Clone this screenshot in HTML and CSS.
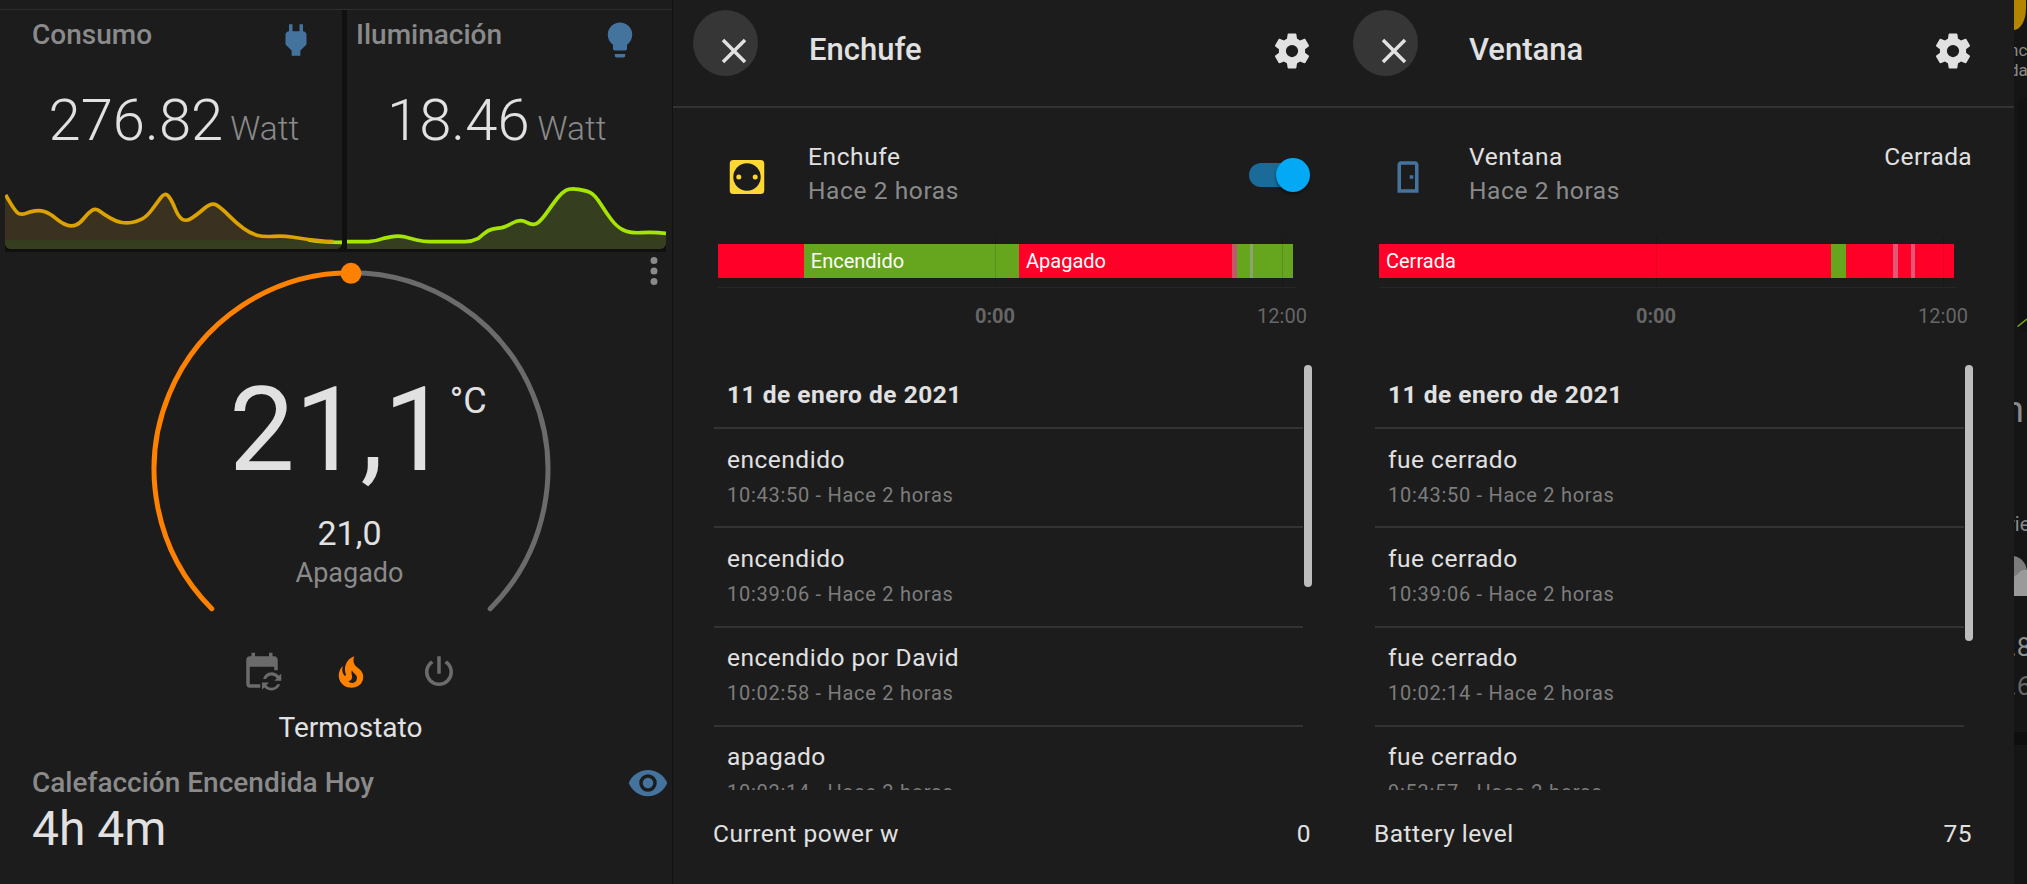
FILE: index.html
```html
<!DOCTYPE html>
<html lang="es">
<head>
<meta charset="utf-8">
<title>Panel</title>
<link rel="stylesheet" href="styles.css">
</head>
<body>
<main class="board">
  <section class="dash">
    <div class="dash-top"></div>
    <div class="stats">
      <article class="stat stat-a">
        <div class="stat-head">
          <h2 class="stat-title">Consumo</h2>
          <svg class="icon tint-blue stat-icon" viewBox="0 0 24 24"><path d="M16,7V3H14V7H10V3H8V7C7,7 6,8 6,9V14.5L9.5,18V21H14.5V18L18,14.5V9C18,8 17,7 16,7Z"/></svg>
        </div>
        <div class="stat-value value-a">276.82<span class="stat-unit">Watt</span></div>
        <svg class="spark spark-a" viewBox="15 0 1011 237" preserveAspectRatio="none">
          <path class="fill-amber" d="M17 75Q45,125 55,130Q65,135 77.5,130Q90,125 105,122.5Q120,120 135,125Q150,130 167.5,145Q185,160 200,165Q215,170 227.5,165Q240,160 252.5,144Q265,128 276,121Q287,114 298.5,123Q310,132 330,143.5Q350,155 365,157.5Q380,160 395,157.5Q410,155 425,147.5Q440,140 455,120Q470,100 482.5,83Q495,66 505,78Q515,90 525,115Q535,140 546.5,147.5Q558,155 574,145Q590,135 612.5,115.5Q635,96 650,105.5Q665,115 687.5,137.5Q710,160 730,175Q750,190 770,195.5Q790,201 820,199Q850,197 875,201Q900,205 925,208.5Q950,212 1026,216V237H15V75Z"/>
          <rect class="fill-lime" x="15" y="211" width="1011" height="26"/>
          <path class="line-lime" d="M925 210Q960,217 1026,217"/>
          <path class="line-amber" d="M17 75Q45,125 55,130Q65,135 77.5,130Q90,125 105,122.5Q120,120 135,125Q150,130 167.5,145Q185,160 200,165Q215,170 227.5,165Q240,160 252.5,144Q265,128 276,121Q287,114 298.5,123Q310,132 330,143.5Q350,155 365,157.5Q380,160 395,157.5Q410,155 425,147.5Q440,140 455,120Q470,100 482.5,83Q495,66 505,78Q515,90 525,115Q535,140 546.5,147.5Q558,155 574,145Q590,135 612.5,115.5Q635,96 650,105.5Q665,115 687.5,137.5Q710,160 730,175Q750,190 770,195.5Q790,201 820,199Q850,197 875,201Q900,205 925,208.5Q950,212 1000,215"/>
        </svg>
      </article>
      <article class="stat stat-b">
        <div class="stat-head">
          <h2 class="stat-title">Iluminación</h2>
          <svg class="icon tint-blue stat-icon" viewBox="0 0 24 24"><path d="M12,2A7,7 0 0,0 5,9C5,11.38 6.19,13.47 8,14.74V17A1,1 0 0,0 9,18H15A1,1 0 0,0 16,17V14.74C17.81,13.47 19,11.38 19,9A7,7 0 0,0 12,2M9,21A1,1 0 0,0 10,22H14A1,1 0 0,0 15,21V20H9V21Z"/></svg>
        </div>
        <div class="stat-value value-b">18.46<span class="stat-unit">Watt</span></div>
        <svg class="spark spark-b" viewBox="21 0 957 237" preserveAspectRatio="none">
          <path class="fill-lime" d="M21 215H85Q110,213 130,205Q130,205 152.5,200.5Q175,196 192.5,200.5Q210,205 230,210Q250,215 270,215H375Q395,215 415,205Q415,205 430,192.5Q445,180 457.5,177.5Q470,175 482.5,173.5Q495,172 517.5,159Q540,146 560,157Q580,168 592.5,159Q605,150 622.5,125Q640,100 652.5,84Q665,68 677.5,61Q690,54 715,58Q740,62 752.5,68.5Q765,75 782.5,102.5Q800,130 815,150Q830,170 850,180Q870,190 905,188Q940,186 978,190V237H21Z"/>
          <path class="line-lime" d="M21 215H85Q110,213 130,205Q130,205 152.5,200.5Q175,196 192.5,200.5Q210,205 230,210Q250,215 270,215H375Q395,215 415,205Q415,205 430,192.5Q445,180 457.5,177.5Q470,175 482.5,173.5Q495,172 517.5,159Q540,146 560,157Q580,168 592.5,159Q605,150 622.5,125Q640,100 652.5,84Q665,68 677.5,61Q690,54 715,58Q740,62 752.5,68.5Q765,75 782.5,102.5Q800,130 815,150Q830,170 850,180Q870,190 905,188Q940,186 978,190"/>
        </svg>
      </article>
    </div>
    <div class="stats-gap"></div>
    <div class="lower">
      <svg class="icon menu-dots" viewBox="0 0 24 24"><path d="M12,16A2,2 0 0,1 14,18A2,2 0 0,1 12,20A2,2 0 0,1 10,18A2,2 0 0,1 12,16M12,10A2,2 0 0,1 14,12A2,2 0 0,1 12,14A2,2 0 0,1 10,12A2,2 0 0,1 12,10M12,4A2,2 0 0,1 14,6A2,2 0 0,1 12,8A2,2 0 0,1 10,6A2,2 0 0,1 12,4Z"/></svg>
      <div class="thermo">
        <div class="dial">
          <svg class="dial-svg" viewBox="0 0 400 360">
            <path class="arc arc-rest" d="M200 12.7A196.8 196.8 0 0 1 339.2 348.7"/>
            <path class="arc arc-on" d="M60.8 348.7A196.8 196.8 0 0 1 200 12.7"/>
            <circle class="dial-dot" cx="200" cy="13.3" r="10.5"/>
          </svg>
          <div class="dial-text">
            <div class="temp-row"><span class="temp">21,1</span><span class="temp-unit">°C</span></div>
            <div class="set-temp">21,0</div>
            <div class="mode">Apagado</div>
          </div>
        </div>
        <div class="modes">
          <svg class="icon tint-grey" viewBox="0 0 24 24"><path d="M11 21H5C3.89 21 3 20.1 3 19V5C3 3.89 3.89 3 5 3H6V1H8V3H16V1H18V3H19C20.1 3 21 3.9 21 5V11H19V9H5V19H11V21Z"/><path d="M17.5 12.2A5.3 5.3 0 0 1 21.6 14.2L23 13V17H19L20.5 15.5A3.6 3.6 0 0 0 17.5 14A3.7 3.7 0 0 0 14.3 16H12.6A5.4 5.4 0 0 1 17.5 12.2ZM12 18H16L14.5 19.5A3.6 3.6 0 0 0 17.5 21A3.7 3.7 0 0 0 20.7 19H22.4A5.4 5.4 0 0 1 13.4 20.8L12 22Z"/></svg>
          <svg class="icon tint-orange" viewBox="0 0 24 24"><path d="M17.66 11.2C17.43 10.9 17.15 10.64 16.89 10.38C16.22 9.78 15.46 9.35 14.82 8.72C13.33 7.26 13 4.85 13.95 3C13 3.23 12.17 3.75 11.46 4.32C8.87 6.4 7.85 10.07 9.07 13.22C9.11 13.32 9.15 13.42 9.15 13.55C9.15 13.77 9 13.97 8.8 14.05C8.57 14.15 8.33 14.09 8.14 13.93C8.08 13.88 8.04 13.83 8 13.76C6.87 12.33 6.69 10.28 7.45 8.64C5.78 10 4.87 12.3 5 14.47C5.06 14.97 5.12 15.47 5.29 15.97C5.43 16.57 5.7 17.17 6 17.7C7.08 19.43 8.95 20.67 10.96 20.92C13.1 21.19 15.39 20.8 17.03 19.32C18.86 17.66 19.5 15 18.56 12.72L18.43 12.46C18.22 12 17.66 11.2 17.66 11.2M14.5 17.5C14.22 17.74 13.76 18 13.4 18.1C12.28 18.5 11.16 17.94 10.5 17.28C11.69 17 12.4 16.12 12.61 15.23C12.78 14.43 12.46 13.77 12.33 13C12.21 12.26 12.23 11.63 12.5 10.94C12.69 11.32 12.89 11.7 13.13 12C13.9 13 15.11 13.44 15.37 14.8C15.41 14.94 15.43 15.08 15.43 15.23C15.46 16.05 15.1 16.95 14.5 17.5H14.5Z"/></svg>
          <svg class="icon tint-grey" viewBox="0 0 24 24"><path d="M16.56,5.44L15.11,6.89C16.84,7.94 18,9.83 18,12A6,6 0 0,1 12,18A6,6 0 0,1 6,12C6,9.83 7.16,7.94 8.88,6.88L7.44,5.44C5.36,6.88 4,9.28 4,12A8,8 0 0,0 12,20A8,8 0 0,0 20,12C20,9.28 18.64,6.88 16.56,5.44M13,3H11V13H13"/></svg>
        </div>
        <div class="thermo-name">Termostato</div>
      </div>
      <div class="today">
        <div class="today-head">
          <h2 class="stat-title wide">Calefacción Encendida Hoy</h2>
          <svg class="icon tint-blue" viewBox="0 0 24 24"><path d="M12,9A3,3 0 0,0 9,12A3,3 0 0,0 12,15A3,3 0 0,0 15,12A3,3 0 0,0 12,9M12,17A5,5 0 0,1 7,12A5,5 0 0,1 12,7A5,5 0 0,1 17,12A5,5 0 0,1 12,17M12,4.5C7,4.5 2.73,7.61 1,12C2.73,16.39 7,19.5 12,19.5C17,19.5 21.27,16.39 23,12C21.27,7.61 17,4.5 12,4.5Z"/></svg>
        </div>
        <div class="today-value">4h 4m</div>
      </div>
    </div>
  </section>

  <section class="dialog">
    <header class="dialog-head">
      <div class="close"><span class="ripple"></span><svg class="icon close-icon" viewBox="0 0 24 24"><path d="M19,6.41L17.59,5L12,10.59L6.41,5L5,6.41L10.59,12L5,17.59L6.41,19L12,13.41L17.59,19L19,17.59L13.41,12L19,6.41Z"/></svg></div>
      <h1 class="dialog-title">Enchufe</h1>
      <svg class="icon gear" viewBox="0 0 24 24"><path d="M12,15.5A3.5,3.5 0 0,1 8.5,12A3.5,3.5 0 0,1 12,8.5A3.5,3.5 0 0,1 15.5,12A3.5,3.5 0 0,1 12,15.5M19.43,12.97C19.47,12.65 19.5,12.33 19.5,12C19.5,11.67 19.47,11.34 19.43,11L21.54,9.37C21.73,9.22 21.78,8.95 21.66,8.73L19.66,5.27C19.54,5.05 19.27,4.96 19.05,5.05L16.56,6.05C16.04,5.66 15.5,5.32 14.87,5.07L14.5,2.42C14.46,2.18 14.25,2 14,2H10C9.75,2 9.54,2.18 9.5,2.42L9.13,5.07C8.5,5.32 7.96,5.66 7.44,6.05L4.95,5.05C4.73,4.96 4.46,5.05 4.34,5.27L2.34,8.73C2.21,8.95 2.27,9.22 2.46,9.37L4.57,11C4.53,11.34 4.5,11.67 4.5,12C4.5,12.33 4.53,12.65 4.57,12.97L2.46,14.63C2.27,14.78 2.21,15.05 2.34,15.27L4.34,18.73C4.46,18.95 4.73,19.03 4.95,18.95L7.44,17.94C7.96,18.34 8.5,18.68 9.13,18.93L9.5,21.58C9.54,21.82 9.75,22 10,22H14C14.25,22 14.46,21.82 14.5,21.58L14.87,18.93C15.5,18.67 16.04,18.34 16.56,17.94L19.05,18.95C19.27,19.03 19.54,18.95 19.66,18.73L21.66,15.27C21.78,15.05 21.73,14.78 21.54,14.63L19.43,12.97Z"/></svg>
    </header>
    <div class="info">
      <svg class="info-icon" viewBox="0 0 42 42"><rect class="socket-body" x="3.75" y="4" width="34.5" height="34" rx="3.5"/><circle class="socket-face" cx="21" cy="21" r="13.7"/><circle class="socket-pin" cx="12.8" cy="21" r="2.5"/><circle class="socket-pin" cx="29.2" cy="21" r="2.5"/></svg>
      <div class="info-text">
        <div class="info-name">Enchufe</div>
        <div class="info-when">Hace 2 horas</div>
      </div>
      <div class="toggle"><span class="toggle-track"></span><span class="toggle-knob"></span></div>
    </div>
    <div class="timeline">
      <div class="bar">
        <span class="seg red" style="width:14.92%"></span>
        <span class="seg named green" style="width:37.43%">Encendido</span>
        <span class="seg named red" style="width:36.97%">Apagado</span>
        <span class="seg mixed" style="width:0.94%"></span>
        <span class="seg green" style="width:2.19%"></span>
        <span class="seg faded" style="width:0.66%"></span>
        <span class="seg green" style="width:6.89%"></span>
      </div>
      <span class="grid-h"></span>
      <span class="tick tick-mid"></span><span class="tick tick-end"></span>
      <span class="tick-label label-mid">0:00</span><span class="tick-label label-end">12:00</span>
    </div>
    <div class="log">
      <span class="scroll-thumb"></span>
      <div class="log-date">11 de enero de 2021</div>
      <div class="log-row"><div class="log-what">encendido</div><div class="log-when">10:43:50 - Hace 2 horas</div></div>
      <div class="log-row"><div class="log-what">encendido</div><div class="log-when">10:39:06 - Hace 2 horas</div></div>
      <div class="log-row"><div class="log-what">encendido por David</div><div class="log-when">10:02:58 - Hace 2 horas</div></div>
      <div class="log-row"><div class="log-what">apagado</div><div class="log-when">10:02:14 - Hace 2 horas</div></div>
    </div>
    <footer class="attr"><span>Current power w</span><span>0</span></footer>
  </section>

  <section class="dialog dialog-wide">
    <header class="dialog-head">
      <div class="close"><span class="ripple"></span><svg class="icon close-icon" viewBox="0 0 24 24"><path d="M19,6.41L17.59,5L12,10.59L6.41,5L5,6.41L10.59,12L5,17.59L6.41,19L12,13.41L17.59,19L19,17.59L13.41,12L19,6.41Z"/></svg></div>
      <h1 class="dialog-title">Ventana</h1>
      <svg class="icon gear" viewBox="0 0 24 24"><path d="M12,15.5A3.5,3.5 0 0,1 8.5,12A3.5,3.5 0 0,1 12,8.5A3.5,3.5 0 0,1 15.5,12A3.5,3.5 0 0,1 12,15.5M19.43,12.97C19.47,12.65 19.5,12.33 19.5,12C19.5,11.67 19.47,11.34 19.43,11L21.54,9.37C21.73,9.22 21.78,8.95 21.66,8.73L19.66,5.27C19.54,5.05 19.27,4.96 19.05,5.05L16.56,6.05C16.04,5.66 15.5,5.32 14.87,5.07L14.5,2.42C14.46,2.18 14.25,2 14,2H10C9.75,2 9.54,2.18 9.5,2.42L9.13,5.07C8.5,5.32 7.96,5.66 7.44,6.05L4.95,5.05C4.73,4.96 4.46,5.05 4.34,5.27L2.34,8.73C2.21,8.95 2.27,9.22 2.46,9.37L4.57,11C4.53,11.34 4.5,11.67 4.5,12C4.5,12.33 4.53,12.65 4.57,12.97L2.46,14.63C2.27,14.78 2.21,15.05 2.34,15.27L4.34,18.73C4.46,18.95 4.73,19.03 4.95,18.95L7.44,17.94C7.96,18.34 8.5,18.68 9.13,18.93L9.5,21.58C9.54,21.82 9.75,22 10,22H14C14.25,22 14.46,21.82 14.5,21.58L14.87,18.93C15.5,18.67 16.04,18.34 16.56,17.94L19.05,18.95C19.27,19.03 19.54,18.95 19.66,18.73L21.66,15.27C21.78,15.05 21.73,14.78 21.54,14.63L19.43,12.97Z"/></svg>
    </header>
    <div class="info">
      <svg class="icon info-icon tint-blue" viewBox="0 0 24 24"><path d="M8,3C6.89,3 6,3.89 6,5V21H18V5C18,3.89 17.11,3 16,3H8M8,5H16V19H8V5M13,11V13H15V11H13Z"/></svg>
      <div class="info-text">
        <div class="info-name">Ventana</div>
        <div class="info-when">Hace 2 horas</div>
      </div>
      <div class="info-state">Cerrada</div>
    </div>
    <div class="timeline">
      <div class="bar">
        <span class="seg named red" style="width:78.6%">Cerrada</span>
        <span class="seg green" style="width:2.56%"></span>
        <span class="seg red" style="width:8.23%"></span>
        <span class="seg pink" style="width:0.96%"></span>
        <span class="seg red" style="width:2.17%"></span>
        <span class="seg pink" style="width:0.7%"></span>
        <span class="seg red" style="width:6.78%"></span>
      </div>
      <span class="grid-h"></span>
      <span class="tick tick-mid"></span><span class="tick tick-end"></span>
      <span class="tick-label label-mid">0:00</span><span class="tick-label label-end">12:00</span>
    </div>
    <div class="log">
      <span class="scroll-thumb thumb-long"></span>
      <div class="log-date">11 de enero de 2021</div>
      <div class="log-row"><div class="log-what">fue cerrado</div><div class="log-when">10:43:50 - Hace 2 horas</div></div>
      <div class="log-row"><div class="log-what">fue cerrado</div><div class="log-when">10:39:06 - Hace 2 horas</div></div>
      <div class="log-row"><div class="log-what">fue cerrado</div><div class="log-when">10:02:14 - Hace 2 horas</div></div>
      <div class="log-row"><div class="log-what">fue cerrado</div><div class="log-when">9:53:57 - Hace 2 horas</div></div>
    </div>
    <footer class="attr"><span>Battery level</span><span>75</span></footer>
  </section>

  <aside class="sliver">
    <div class="sliver-gold"></div>
    <div class="sliver-small">nc</div>
    <div class="sliver-small">da</div>
    <div class="sliver-card"><svg class="sliver-line" viewBox="0 0 10 10"><path d="M0 9L10 1"/></svg></div>
    <div class="sliver-big">n</div>
    <div class="sliver-word">rie</div>
    <svg class="sliver-cloud" viewBox="0 0 13 40"><path class="cloud-back" d="M0 0A16 16 0 0 1 13 16V40H0Z"/><path class="cloud-front" d="M0 30A8 8 0 0 1 4 18A9 9 0 0 1 13 14V40H0Z"/></svg>
    <div class="sliver-num">.8</div>
    <div class="sliver-num dim">.6</div>
    <div class="sliver-band"></div>
  </aside>
</main>
</body>
</html>
```

FILE: styles.css
```css
* { box-sizing: border-box; }
html, body { margin: 0; padding: 0; background: #141414; }
body { font-family: Roboto, "Liberation Sans", sans-serif; color: #e1e1e1; }
h1, h2 { margin: 0; }

.board { display: flex; width: 2027px; height: 884px; overflow: hidden; align-items: stretch; }
.icon { display: block; flex: none; width: 42px; height: 42px; fill: currentColor; }
.tint-blue { color: #44739e; }
.tint-grey { color: #6b6b6b; }
.tint-orange { color: #ff8100; }

/* left dashboard */
.dash { position: relative; flex: none; width: 672px; display: flex; flex-direction: column; background: #1c1c1c; }
.dash-top { height: 10px; border-bottom: 1px solid #2f2f2f; }
.stats { display: flex; gap: 5px; height: 239px; margin-left: 5px; width: 661px; background: #101010; }
.stats-gap { height: 3px; width: 661px; margin-left: 5px; background: #101010; }
.stat { display: flex; flex-direction: column; height: 239px; background: #1c1c1c; overflow: hidden; }
.stat-a { width: 337px; border-radius: 0 0 6px 6px; }
.stat-b { width: 319px; border-radius: 0 0 6px 0; }
.stat-head { display: flex; justify-content: space-between; align-items: flex-start; padding-top: 7px; padding-right: 25.5px; height: 50.5px; }
.stat-a .stat-head { padding-left: 27px; }
.stat-b .stat-head { padding-left: 9px; }
.stat-icon { margin-top: 1.5px; }
.stat-title { font-size: 28px; line-height: 36px; font-weight: 500; color: #8a8a8a; }
.stat-value { margin-top: 29.7px; font-size: 58px; line-height: 60px; font-weight: 300; color: #e1e1e1; white-space: nowrap; }
.value-a { padding-left: 43.5px; }
.value-b { padding-left: 40px; }
.stat-unit { margin-left: 7px; font-size: 33.5px; font-weight: 300; color: #8a8a8a; }
.value-b .stat-unit { margin-left: 8px; }
.spark { display: block; margin-top: auto; flex: none; height: 79px; }
.spark-a { width: 337px; }
.spark-b { width: 319px; }
.fill-amber { fill: #3a3120; }
.fill-lime { fill: #353f20; }
.line-amber, .line-lime { fill: none; stroke-width: 11; stroke-linecap: butt; stroke-linejoin: round; }
.line-amber { stroke: #dca200; }
.line-lime { stroke: #a6e500; }

.lower { flex: 1; display: flex; flex-direction: column; position: relative; margin-left: 5px; }
.menu-dots { position: absolute; top: -2px; left: 628px; color: #8a8a8a; }
.thermo { display: flex; flex-direction: column; align-items: center; padding-left: 24px; padding-top: 8px; }
.dial { position: relative; width: 400px; height: 360px; }
.dial-svg { display: block; width: 400px; height: 360px; }
.arc { fill: none; stroke-width: 5; stroke-linecap: round; }
.arc-rest { stroke: #6b6b6b; }
.arc-on { stroke: #ff8100; }
.dial-dot { fill: #ff8100; }
.dial-text { position: absolute; inset: 0; padding-top: 111.6px; display: flex; flex-direction: column; align-items: center; }
.temp-row { display: flex; align-items: flex-start; height: 117px; margin-left: 14.5px; }
.temp { font-size: 117px; line-height: 117px; font-weight: 400; color: #e1e1e1; }
.temp-unit { margin-top: 9.5px; margin-left: 0.5px; font-size: 36px; line-height: 40px; color: #e1e1e1; }
.set-temp { margin-top: 24.8px; margin-right: 2px; font-size: 34px; line-height: 40px; color: #e1e1e1; }
.mode { margin-top: 1.8px; margin-right: 2px; font-size: 27px; line-height: 36px; color: #8a8a8a; }
.modes { display: flex; gap: 46.5px; margin-top: 31px; }
.thermo-name { margin-top: 17px; font-size: 28px; line-height: 36px; color: #e1e1e1; }
.today { padding: 0 3px 0 27px; margin-top: 15.5px; }
.today-head { display: flex; justify-content: space-between; align-items: center; }
.stat-title.wide { font-size: 28px; }
.today-value { margin-top: -2.5px; font-size: 48px; line-height: 56px; color: #e1e1e1; }

/* dialogs */
.dialog { flex: none; width: 661px; display: flex; flex-direction: column; background: #1c1c1c; border-left: 1px solid #111; }
.dialog-wide { width: 681px; border-left: 0; }
.dialog-head { display: flex; align-items: center; height: 108px; padding: 0 20.5px 0 39.5px; border-bottom: 2px solid #333; }
.dialog-wide .dialog-head { padding-left: 39.5px; padding-right: 40.5px; }
.close { position: relative; width: 42px; height: 42px; margin-top: -4px; flex: none; }
.ripple { position: absolute; left: -19.5px; top: -20px; width: 65px; height: 66px; border-radius: 50%; background: #363636; }
.close-icon { position: relative; color: #e1e1e1; }
.dialog-title { margin-left: 54.5px; margin-top: -6px; flex: 1; font-size: 31px; line-height: 40px; font-weight: 500; color: #e1e1e1; }
.gear { color: #e1e1e1; margin-top: -4px; }

.info { display: flex; align-items: flex-start; height: 99px; padding: 33px 23px 0 53px; position: relative; }
.dialog-wide .info { padding-left: 54px; padding-right: 42px; }
.info-icon { flex: none; width: 42px; height: 42px; margin-top: 15px; }
.socket-body { fill: #fdd835; }
.socket-face { fill: #1c1c1c; }
.socket-pin { fill: #fdd835; }
.info-text { flex: 1; margin-left: 40px; }
.info-name { font-size: 24.5px; line-height: 32px; letter-spacing: 0.6px; color: #e1e1e1; }
.info-state { font-size: 24.5px; line-height: 32px; letter-spacing: 0.3px; color: #e1e1e1; }
.info-when { margin-top: 2px; font-size: 24.5px; line-height: 32px; letter-spacing: 0.6px; color: #8a8a8a; }
.toggle { position: relative; width: 61px; height: 34px; margin-top: 17px; flex: none; }
.toggle-track { position: absolute; left: 0; top: 5px; width: 51px; height: 24px; border-radius: 12px; background: #1a6b99; }
.toggle-knob { position: absolute; right: 0; top: 0; width: 34px; height: 34px; border-radius: 50%; background: #03a9f4; box-shadow: 0 2px 3px rgba(0, 0, 0, .5); }

.timeline { position: relative; flex: none; height: 124px; margin: 29px 0 0 45px; width: 575px; }
.dialog-wide .timeline { margin-left: 46px; }
.bar { position: absolute; left: 0; right: 0; top: 8px; height: 34px; display: flex; }
.seg { display: block; flex: none; height: 100%; overflow: hidden; white-space: nowrap; font-size: 20px; line-height: 34px; color: #fff; }
.named { padding-left: 7px; }
.red { background: #ff0029; }
.green { background: #66a61e; }
.mixed { background: #c05a6a; }
.faded { background: #8da26e; }
.pink { background: #e65674; }
.grid-h { position: absolute; left: 0; right: -3px; top: 51px; height: 1px; background: #262626; }
.tick { position: absolute; top: 0; width: 1px; height: 52px; background: rgba(0, 0, 0, .12); }
.tick-mid { left: 277px; }
.tick-end { left: 564px; }
.tick-label { position: absolute; top: 68px; font-size: 20px; line-height: 24px; color: #666; transform: translateX(-50%); }
.label-mid { left: 277px; font-weight: 700; }
.label-end { left: 564px; }

.log { position: relative; flex: none; height: 430px; margin-left: 41px; width: 589px; margin-top: 0; overflow: visible; clip-path: inset(0 -12px 0 0); }
.dialog-wide .log { margin-left: 42px; }
.scroll-thumb { position: absolute; left: 590px; top: 5px; width: 8px; height: 222px; border-radius: 4px; background: #bdbdbd; }
.thumb-long { height: 276px; }
.log-date { height: 69px; padding: 19px 0 0 13px; border-bottom: 2px solid #333; font-size: 24.5px; line-height: 32px; font-weight: 700; letter-spacing: 0.5px; color: #e1e1e1; }
.log-row { height: 99.3px; padding: 14.5px 0 0 13px; border-bottom: 2px solid #333; }
.log-what { font-size: 24.5px; line-height: 32px; letter-spacing: 0.5px; color: #e1e1e1; }
.log-when { margin-top: 6px; font-size: 20px; line-height: 26px; letter-spacing: 0.72px; color: #7d7d7d; }
.attr { display: flex; justify-content: space-between; margin-top: 28px; padding: 0 22px 0 40px; font-size: 24.5px; line-height: 32px; letter-spacing: 0.5px; color: #e1e1e1; }
.dialog-wide .attr { padding-left: 41px; padding-right: 42px; }

/* clipped neighbour on the right edge */
.sliver { flex: 1; display: flex; flex-direction: column; overflow: hidden; background: #151515; color: #8a8a8a; }
.sliver-gold { flex: none; width: 12px; height: 30px; border-bottom-right-radius: 12px 22px; background: #b48600; margin-bottom: 10px; }
.sliver-small { flex: none; height: 20px; margin-left: -5px; font-size: 17px; line-height: 20px; white-space: nowrap; }
.sliver-card { flex: none; height: 235px; margin: 17px 0 0 3px; background: #121212; border-radius: 8px 0 0 8px; position: relative; overflow: hidden; }
.sliver-line { position: absolute; left: 0; bottom: 4px; width: 10px; height: 10px; fill: none; stroke: #7aa31e; stroke-width: 1.5; }
.sliver-big { flex: none; height: 40px; margin: 58px 0 0 -10px; font-size: 36px; line-height: 40px; white-space: nowrap; }
.sliver-word { flex: none; height: 24px; margin: 82px 0 0 -6px; font-size: 20px; line-height: 24px; white-space: nowrap; }
.sliver-cloud { display: block; flex: none; width: 13px; height: 40px; margin: 20px 0 0 0; }
.cloud-back { fill: #7c7c7c; }
.cloud-front { fill: #9a9a9a; }
.sliver-num { flex: none; height: 30px; margin: 36px 0 0 -4px; font-size: 26px; line-height: 30px; color: #909090; }
.sliver-num.dim { margin-top: 9px; color: #666; }
.sliver-band { flex: none; height: 13px; margin-top: 31px; background: #0e0e0e; }
```
